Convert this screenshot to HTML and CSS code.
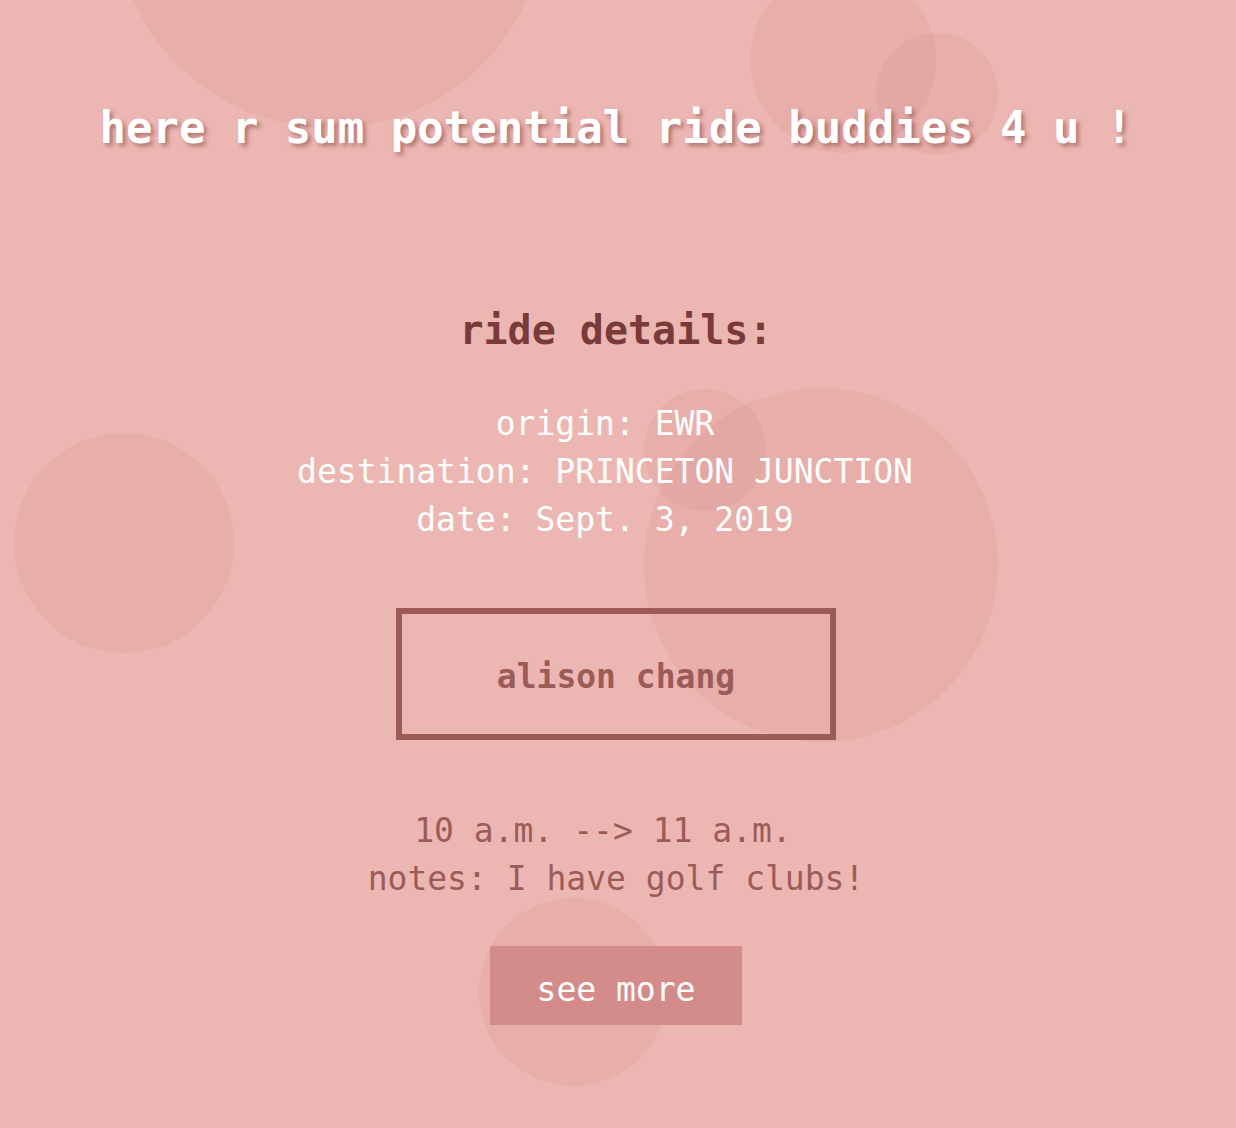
FILE: index.html
```html
<!DOCTYPE html>
<html lang="en">
<head>
<meta charset="utf-8">
<title>ride buddies</title>
<link rel="stylesheet" href="styles.css">
</head>
<body>
<div class="bubbles" aria-hidden="true">
  <span class="bubble b1"></span>
  <span class="bubble b2"></span>
  <span class="bubble b3"></span>
  <span class="bubble b4"></span>
  <span class="bubble b5"></span>
  <span class="bubble b6"></span>
  <span class="bubble b7"></span>
</div>
<main class="page">
  <h1 class="title">here r sum potential ride buddies 4 u !</h1>
  <section class="details">
    <h2 class="details-head">ride details:</h2>
    <div class="info">
      <div class="line">origin: EWR</div>
      <div class="line">destination: PRINCETON JUNCTION</div>
      <div class="line">date: Sept. 3, 2019</div>
    </div>
  </section>
  <div class="buddy">alison chang</div>
  <div class="times">
    <div class="line">10 a.m. --&gt; 11 a.m.</div>
    <div class="notes">notes: I have golf clubs!</div>
  </div>
  <a class="more" href="#">see more</a>
</main>
</body>
</html>
```

FILE: styles.css
```css
html, body {
  margin: 0;
  padding: 0;
}

body {
  background: #ecb7b2;
  font-family: "DejaVu Sans Mono", "Liberation Mono", monospace;
  min-height: 1128px;
  position: relative;
  overflow: hidden;
}

.bubbles {
  position: absolute;
  inset: 0;
  overflow: hidden;
  z-index: 0;
}

.bubble {
  position: absolute;
  border-radius: 50%;
  background: rgba(214, 140, 140, 0.2);
}

.b1 { left: 115px; top: -302px; width: 430px; height: 430px; }
.b2 { left: 750px; top: -33px; width: 186px; height: 186px; }
.b3 { left: 876px; top: 33px; width: 122px; height: 122px; }
.b4 { left: 14px; top: 433px; width: 220px; height: 220px; }
.b5 { left: 644px; top: 388px; width: 354px; height: 354px; }
.b6 { left: 644px; top: 389px; width: 122px; height: 122px; }
.b7 { left: 479px; top: 898px; width: 188px; height: 188px; }

.page {
  position: relative;
  z-index: 1;
  display: flex;
  flex-direction: column;
  align-items: center;
  text-align: center;
  padding: 102px 4px 0 0;
}

.title {
  margin: 0;
  font-size: 44px;
  line-height: 52px;
  font-weight: bold;
  color: #ffffff;
  text-shadow: 3px 3px 4px rgba(122, 52, 52, 0.5);
  white-space: nowrap;
}

.details {
  margin-top: 152px;
  display: flex;
  flex-direction: column;
  align-items: center;
}

.details-head {
  margin: 0;
  font-size: 40px;
  line-height: 48px;
  font-weight: bold;
  color: #7b3a3a;
}

.info {
  margin-top: 46px;
  font-size: 33px;
  line-height: 48px;
  color: #ffffff;
  padding-right: 22px;
}

.buddy {
  margin-top: 64px;
  box-sizing: border-box;
  width: 440px;
  border: 6px solid #9c5b58;
  padding: 39px 0 33px;
  font-size: 33px;
  line-height: 48px;
  font-weight: bold;
  color: #9c5b58;
}

.times {
  margin-top: 67px;
  font-size: 33px;
  line-height: 48px;
  color: #9c5b58;
}

.times .line {
  padding-right: 26px;
}

.more {
  margin-top: 43px;
  box-sizing: border-box;
  width: 252px;
  height: 79px;
  padding-top: 20px;
  background: #d48c8a;
  color: #ffffff;
  font-size: 33px;
  line-height: 48px;
  text-decoration: none;
}
```
